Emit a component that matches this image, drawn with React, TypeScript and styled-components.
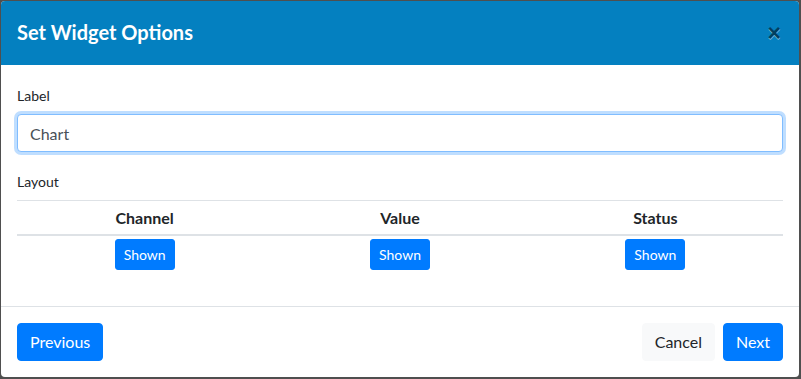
import styled, { createGlobalStyle } from "styled-components";

const GlobalStyle = createGlobalStyle`
    html, body {
        margin: 0;
        padding: 0;
        background: #4f4f4f;
    }
    body {
        font-family: "Segoe UI", Lato, "Noto Sans", sans-serif;
        color: #212529;
    }
`;

const columns = ["Channel", "Value", "Status"];

export default function App() {
    return (
        <>
            <GlobalStyle />
            <Backdrop>
                <Modal>
                    <Header>
                        <Title>Set Widget Options</Title>
                        <CloseButton aria-label="Close">×</CloseButton>
                    </Header>
                    <Body>
                        <FormGroup>
                            <Label>Label</Label>
                            <Input defaultValue="Chart" />
                        </FormGroup>
                        <Label>Layout</Label>
                        <Table>
                            <thead>
                                <tr>
                                    {columns.map((c) => (
                                        <HeadCell key={c}>{c}</HeadCell>
                                    ))}
                                </tr>
                            </thead>
                            <tbody>
                                <tr>
                                    {columns.map((c) => (
                                        <Cell key={c}>
                                            <Button size="sm">Shown</Button>
                                        </Cell>
                                    ))}
                                </tr>
                            </tbody>
                        </Table>
                    </Body>
                    <Footer>
                        <Button>Previous</Button>
                        <FooterRight>
                            <Button variant="light">Cancel</Button>
                            <Button>Next</Button>
                        </FooterRight>
                    </Footer>
                </Modal>
            </Backdrop>
        </>
    );
}

const Backdrop = styled.div`
    width: 801px;
    height: 379px;
    padding: 1px 0 0 1px;
    box-sizing: border-box;
    background: #4f4f4f;
`;

const Modal = styled.div`
    width: 798px;
    background: #fff;
    border-radius: 4px;
    overflow: hidden;
    display: flex;
    flex-direction: column;
`;

const Header = styled.div`
    height: 64px;
    background: #0480c0;
    display: flex;
    align-items: center;
    justify-content: space-between;
    padding: 0 16px 0 16px;
`;

const Title = styled.h5`
    margin: 0;
    color: #fff;
    font-size: 20px;
    font-weight: 700;
    line-height: 30px;
    padding-bottom: 2px;
`;

const CloseButton = styled.button`
    background: transparent;
    border: none;
    padding: 0 2px 0 0;
    margin-top: 0;
    font-family: "Liberation Sans", Arial, sans-serif;
    font-size: 23px;
    font-weight: 700;
    line-height: 1;
    color: #000;
    opacity: 0.5;
    text-shadow: 0 1px 0 #fff;
    cursor: pointer;
`;

const Body = styled.div`
    padding: 20px 16px 16px;
`;

const FormGroup = styled.div`
    margin-bottom: 19px;
`;

const Label = styled.label`
    display: block;
    font-size: 14px;
    line-height: 21px;
    margin-bottom: 8px;
`;

const Input = styled.input`
    display: block;
    width: 100%;
    box-sizing: border-box;
    height: 38px;
    padding: 6px 12px;
    font-family: inherit;
    font-size: 16px;
    color: #495057;
    border: 1px solid #80bdff;
    border-radius: 4px;
    box-shadow: 0 0 0 3px rgba(0, 123, 255, 0.25);
    outline: none;
`;

const Table = styled.table`
    width: 100%;
    border-collapse: collapse;
    table-layout: fixed;
    margin-bottom: 16px;
`;

const HeadCell = styled.th`
    border-top: 1px solid #dee2e6;
    border-bottom: 2px solid #dee2e6;
    padding: 6px 4px;
    font-size: 16px;
    line-height: 21px;
    font-weight: 700;
    text-align: center;
`;

const Cell = styled.td`
    padding: 3px 4px 4px;
    text-align: center;
`;

const Button = styled.button<{ size?: "sm"; variant?: "light" }>`
    font-family: inherit;
    border: 1px solid ${(p) => (p.variant === "light" ? "#f8f9fa" : "#007bff")};
    background: ${(p) => (p.variant === "light" ? "#f8f9fa" : "#007bff")};
    color: ${(p) => (p.variant === "light" ? "#212529" : "#fff")};
    font-size: ${(p) => (p.size === "sm" ? "14px" : "16px")};
    line-height: 1.5;
    padding: ${(p) => (p.size === "sm" ? "4px 8px" : "6px 12px")};
    border-radius: ${(p) => (p.size === "sm" ? "3px" : "4px")};
    cursor: pointer;
`;

const Footer = styled.div`
    border-top: 1px solid #dee2e6;
    padding: 16px;
    display: flex;
    justify-content: space-between;
    align-items: center;
`;

const FooterRight = styled.div`
    display: flex;
    gap: 8px;
`;
